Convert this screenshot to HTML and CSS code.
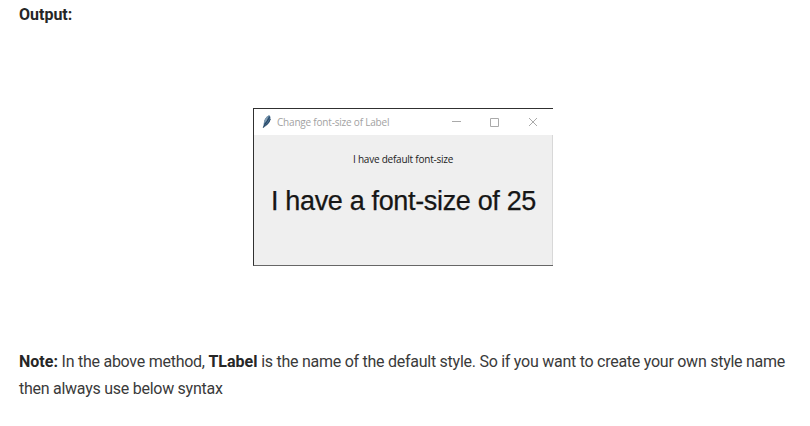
FILE: index.html
```
<!DOCTYPE html>
<html lang="en">
<head>
<meta charset="utf-8">
<title>Change font-size of Label</title>
<link rel="stylesheet" href="styles.css">
</head>
<body>
<main class="article">
  <p class="output"><strong>Output:</strong></p>
  <figure class="window">
    <header class="titlebar">
      <svg class="feather" viewBox="0 0 10 16"><path d="M1.200 13.500 1.800 9.500Q2 4 7 1.200Q9 2 8.300 5.500Q7.500 9.500 3.300 12L1.800 13.800Z" fill="#456b8c"/><path d="M1.800 9.500Q2 4 7 1.200L4.500 7Z" fill="#829db2"/><path d="M1.200 13.700 3 10.500 7.600 3.200M3.300 12Q7.500 9 8.400 5" fill="none" stroke="#24405c" stroke-width=".9"/></svg>
      <span class="title">Change font-size of Label</span>
      <svg class="controls" viewBox="0 0 90 12" fill="none" stroke="#aaa" stroke-width="1"><path d="M1 5.500h9M39.500 2.500h8v8h-8zM78 2l8 8M86 2l-8 8"/></svg>
    </header>
    <div class="client">
      <div class="small-label">I have default font-size</div>
      <div class="large-label">I have a font-size of 25</div>
    </div>
  </figure>
  <p class="note"><span class="line first"><strong>Note:</strong> In the above method, <strong>TLabel</strong> is the name of the default style. So if you want to create your own style name</span> <span class="line second">then always use below syntax</span></p>
</main>
</body>
</html>
```
FILE: styles.css
```
* { box-sizing: border-box; }
body { margin: 0; background: #fff; color: #333; font: 16px/27px Roboto, sans-serif; overflow: hidden; }
.article { height: 426px; padding: 1px 19px 0; }
.output { margin: 0; height: 27px; }
strong { color: #262626; font-weight: 700; letter-spacing: 0; }
.window { margin: 80px 0 0 234px; width: 300px; height: 158px; border: solid #303030; border-width: 1px 0 1px 1px; border-bottom-color: #666; background: #efefef; }
.titlebar { height: 26px; display: flex; align-items: center; background: #fff; padding: 0 0 1px 8px; }
.feather { width: 10px; height: 16px; flex: none; }
.title { width: 113px; margin-left: 5px; color: #a2a2a2; font: 10px/16px "Open Sans", sans-serif; letter-spacing: -.2px; white-space: nowrap; }
.controls { width: 90px; height: 12px; margin-left: 61px; flex: none; }
.client { height: 130px; border-right: 1px solid #d8d8d8; }
.small-label { padding: 16px 0 0 99px; font: 10px/16px "Open Sans", sans-serif; letter-spacing: -.23px; color: #222; white-space: nowrap; }
.large-label { margin: 18px 0 0 17px; font: 27px/32px "Liberation Sans", sans-serif; letter-spacing: -.34px; color: #161616; -webkit-text-stroke: .25px #161616; white-space: nowrap; }
.note { margin: 82px 0 0; }
.line { display: block; white-space: nowrap; letter-spacing: -.26px; color: #3a3a3a; }
```
